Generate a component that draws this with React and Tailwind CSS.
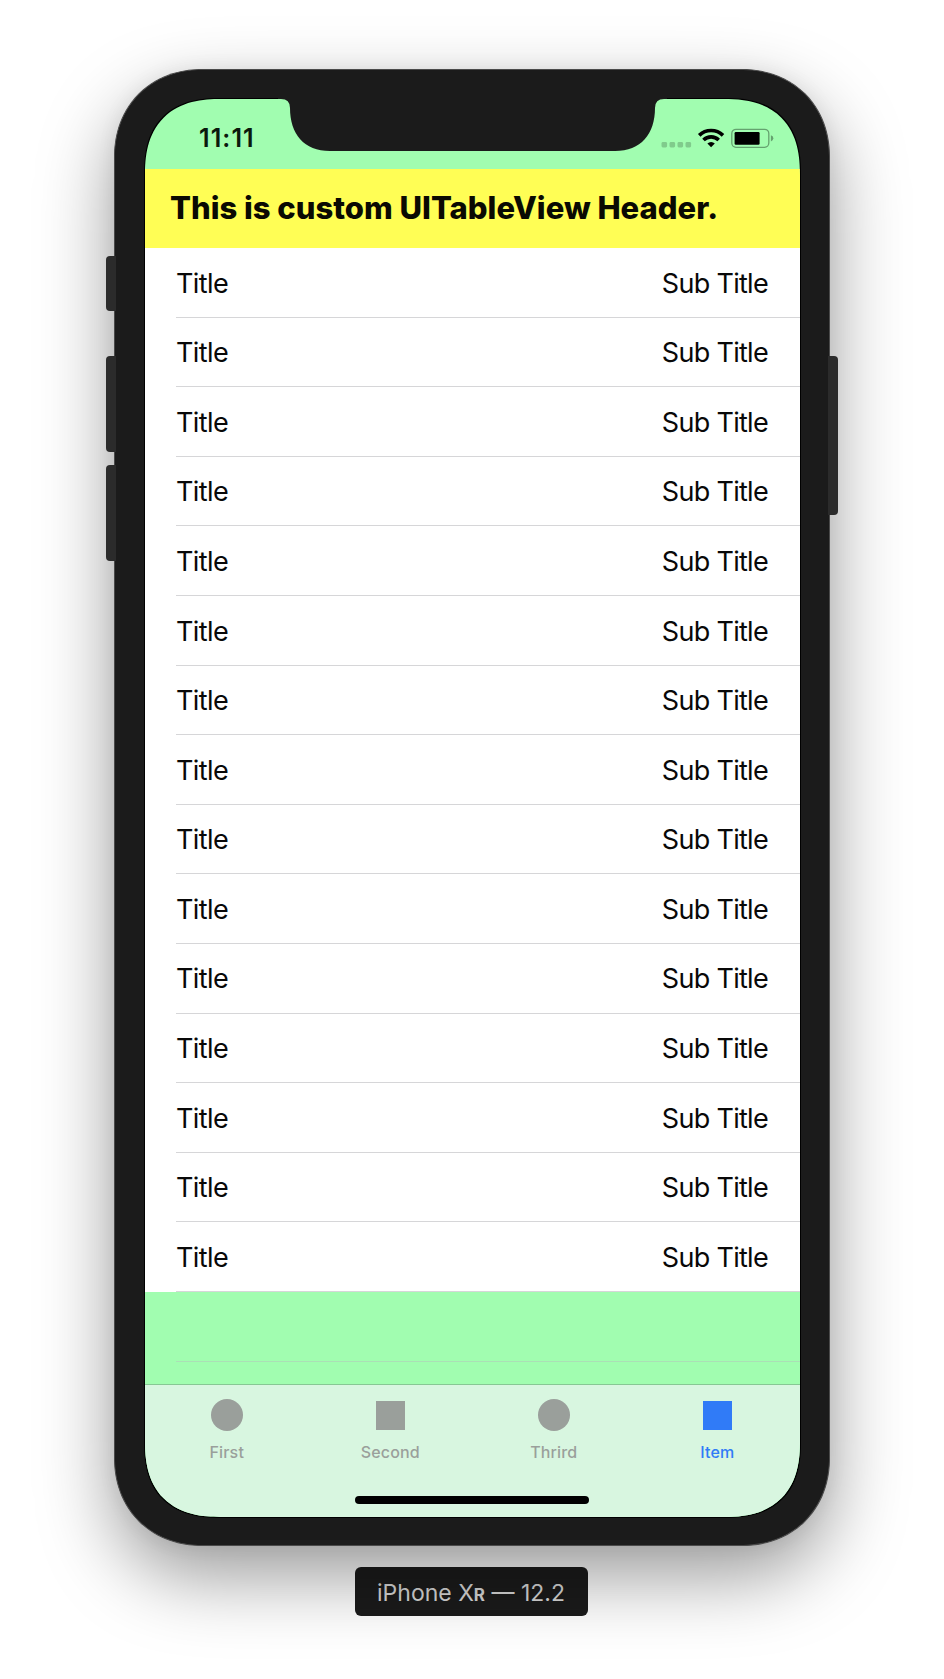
const rows = Array.from({ length: 15 }, (_, i) => i);

const tabs = [
  { label: 'First', shape: 'circle' },
  { label: 'Second', shape: 'square' },
  { label: 'Thrird', shape: 'circle' },
  { label: 'Item', shape: 'square', active: true },
];

function StatusBar() {
  return (
    <div className="flex h-[69.5px] shrink-0 items-start justify-between pr-[26px] pl-[54px]">
      <span className="mt-[21px] text-[25px] leading-[36px] font-semibold tracking-[1.1px] text-[#0a190c]">11:11</span>
      <svg className="mt-[29px]" width="113" height="21" viewBox="661 128 113 21">
        <g fill="#80cb8c">
          <rect x="661.5" y="142" width="5.6" height="5.4" rx="1.4" />
          <rect x="669.5" y="142" width="5.6" height="5.4" rx="1.4" />
          <rect x="677.5" y="142" width="5.6" height="5.4" rx="1.4" />
          <rect x="685.5" y="142" width="5.6" height="5.4" rx="1.4" />
        </g>
        <g fill="none" stroke="#000" strokeWidth="3.6">
          <path d="M699.2 135.4a17 17 0 0 1 23.8 0" />
          <path d="M703.5 140a10.8 10.8 0 0 1 15.2 0" />
        </g>
        <path d="M707.4 143.5a5.3 5.3 0 0 1 7.4 0l-3.7 3.8z" />
        <rect x="731.8" y="129.3" width="37" height="18" rx="4.2" fill="none" stroke="#65a26f" strokeWidth="1.3" />
        <rect x="734.6" y="132" width="25" height="12.8" rx="1.2" />
        <path d="M770.9 135.2a3.2 3.2 0 0 1 0 6.2z" fill="#65a26f" />
      </svg>
    </div>
  );
}

function Row() {
  return (
    <li className="flex h-[69.6px] pl-[31px]">
      <div className="flex flex-1 items-center justify-between border-b border-[#d6d6d8] pt-[3px] pr-8">
        <span className="tracking-[-0.6px]">Title</span>
        <span className="tracking-[-0.7px]">Sub Title</span>
      </div>
    </li>
  );
}

function TabBar() {
  return (
    <nav className="flex h-[133px] shrink-0 flex-col items-center border-t border-[#86c893] bg-[#d8f6e0] pr-px">
      <div className="grid w-full grid-cols-4">
        {tabs.map((tab) => (
          <div
            key={tab.label}
            className={`flex flex-col items-center ${tab.active ? 'text-[#307bf7]' : 'text-[#9a9f9b]'}`}
          >
            <div className="mt-[14px] flex h-8 items-center">
              <div className={`bg-current ${tab.shape === 'circle' ? 'size-8 rounded-full' : 'size-[29px]'}`} />
            </div>
            <span className="mt-[9px] text-[16px] leading-[24px] font-medium tracking-[0.15px]">{tab.label}</span>
          </div>
        ))}
      </div>
      <div className="mt-[32px] h-2 w-[234px] rounded-full bg-black" />
    </nav>
  );
}

export default function App() {
  return (
    <div className="flex h-[1679px] w-[944px] flex-col items-center overflow-hidden bg-white pt-[69px] font-[Inter,sans-serif]">
      <div className="relative h-[1477px] w-[716px] shrink-0">
        <div className="absolute top-[187px] -left-[8px] z-10 h-[55px] w-[10px] rounded-l-[4px] bg-[#2b2b2b]" />
        <div className="absolute top-[287px] -left-[8px] z-10 h-[96px] w-[10px] rounded-l-[4px] bg-[#2b2b2b]" />
        <div className="absolute top-[396px] -left-[8px] z-10 h-[96px] w-[10px] rounded-l-[4px] bg-[#2b2b2b]" />
        <div className="absolute top-[287px] -right-[8px] z-10 h-[159px] w-[10px] rounded-r-[4px] bg-[#2b2b2b]" />
        <div className="relative flex h-full rounded-[88px] border border-[#4a4a4a] bg-[#1b1b1b] pt-[29px] pr-[29px] pb-[28px] pl-[30px] shadow-[0_30px_76px_rgba(0,0,0,0.4),0_0_20px_rgba(0,0,0,0.06)] [corner-shape:superellipse(1.08)]">
          <main className="flex flex-1 flex-col overflow-hidden rounded-[76px] bg-[#a1fdb0] ring-1 ring-black [corner-shape:superellipse(1.3)]">
            <StatusBar />
            <h1 className="flex h-[79.5px] shrink-0 items-center bg-[#fffe55] pl-[25px] text-[31px] font-extrabold tracking-[0px] text-[#0a0a02]">
              This is custom UITableView Header.
            </h1>
            <ul className="bg-white text-[27px] text-[#080808]">
              {rows.map((i) => (
                <Row key={i} />
              ))}
            </ul>
            <div className="ml-[31px] h-[69.6px] shrink-0 border-b border-[#abdfb6]" />
            <div className="flex-1" />
            <TabBar />
          </main>
          <svg className="absolute top-[27px] left-[163px]" width="389" height="55" viewBox="278 97 389 55">
            <path
              d="M278 97V99H281Q290 99 290 108C290 134 304 151 330 151H615C641 151 655 134 655 108Q655 99 664 99H667V97Z"
              fill="#1b1b1b"
            />
          </svg>
        </div>
      </div>
      <div className="mt-[21px] mr-[2px] flex h-[49px] w-[233px] items-center justify-center rounded-[6px] bg-[#1b1b1b] pt-[3px] text-[23px] text-[#d8d8d8] ring-1 ring-white/30">
        <span>
          iPhone X<span className="text-[17px] font-bold">R</span> — 12.2
        </span>
      </div>
    </div>
  );
}
